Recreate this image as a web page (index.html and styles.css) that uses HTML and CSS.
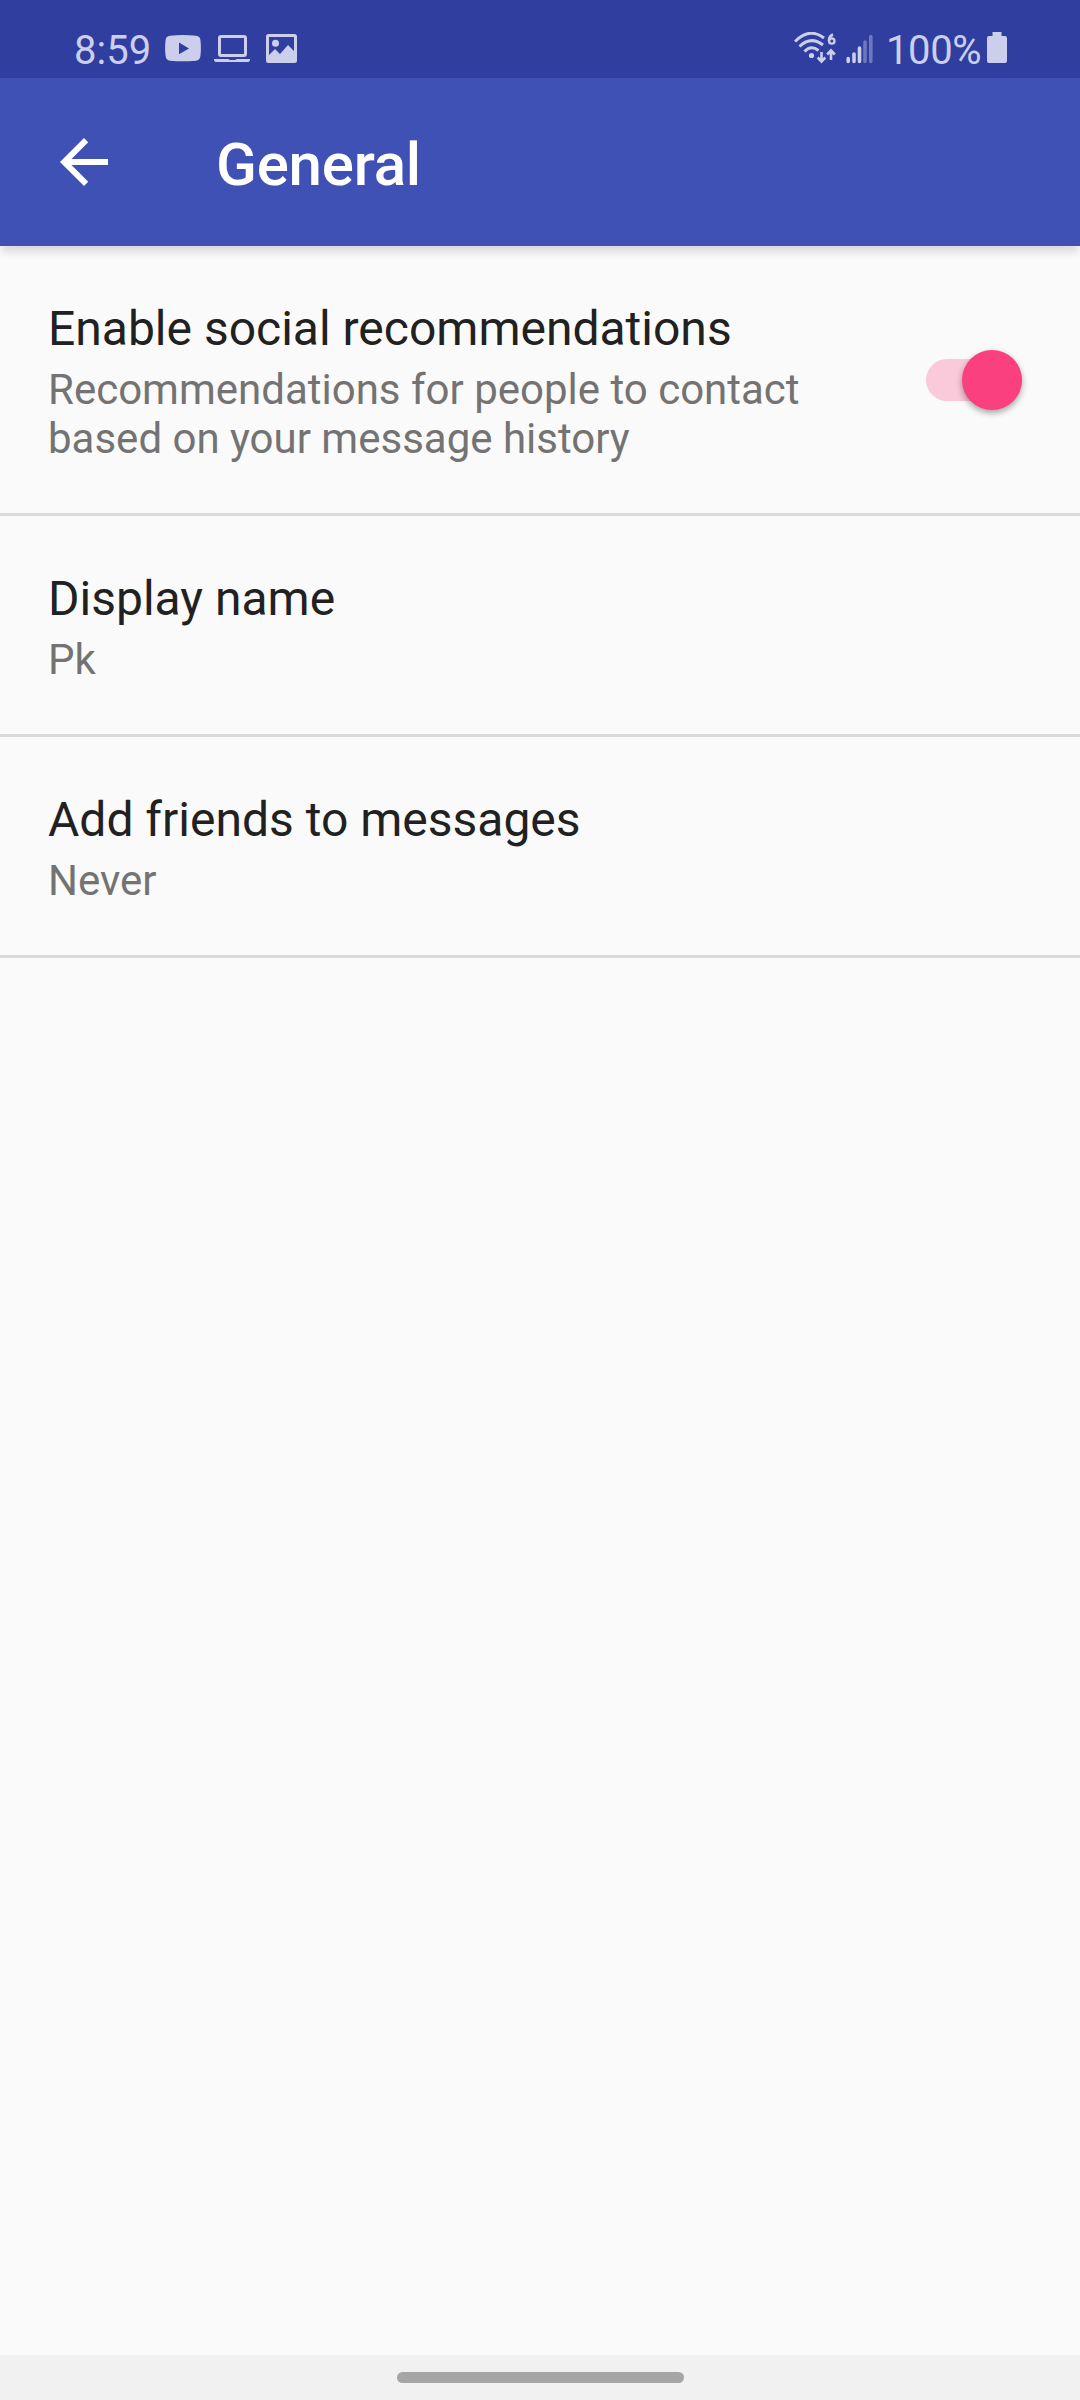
FILE: index.html
```html
<!DOCTYPE html>
<html lang="en">
<head>
<meta charset="utf-8">
<title>General</title>
<link rel="stylesheet" href="styles.css">
</head>
<body>
<div class="screen">
  <div class="status-bar">
    <div class="status-left">
      <span class="clock">8:59</span>
      <svg class="icon-video" width="36" height="27" viewBox="0 0 36 27" fill="currentColor"><path fill-rule="evenodd" d="M5 .8Q18-.6 31 .8 35 1.200 35.400 5 36.400 13.500 35.400 21 35 25.200 31 25.700 18 27 5 25.700 1 25.200.6 21-.4 13.500.6 5 1 1.200 5 .8ZM14 7.500V19.200L24 13.400Z"/></svg>
      <svg class="icon-laptop" width="36" height="28" viewBox="0 0 36 28" fill="currentColor"><path fill-rule="evenodd" d="M7 0H30Q33 0 33 3V19Q33 22 30 22H7Q4 22 4 19V3Q4 0 7 0ZM7 3V19H30V3ZM0 24H14L16 25H21L23 24H36V25.500L34.500 27H1.500L0 25.500Z"/></svg>
      <svg class="icon-image" width="31" height="29" viewBox="0 0 31 29" fill="currentColor"><path fill-rule="evenodd" d="M2.500 0H28.500Q31 0 31 2.500V26.500Q31 29 28.500 29H2.500Q0 29 0 26.500V2.500Q0 0 2.500 0ZM3 3V21L9 15 14 20 22 11 28 17V3ZM9.500 5.800A3.500 3.500 0 1 1 9.500 12.800 3.500 3.500 0 1 1 9.500 5.800Z"/></svg>
    </div>
    <div class="status-right">
      <svg class="icon-wifi" width="42" height="32" viewBox="0 0 42 32" fill="none" stroke="currentColor" stroke-width="3">
        <path d="M1 9.500Q15.500-5 30 6M5.500 14.500Q17 3.500 29 13M10.500 19.500Q17 12.500 24.500 18.500"/>
        <circle cx="17.500" cy="23.500" r="2.600" fill="currentColor" stroke="none"/>
        <path stroke-width="2.600" d="M27.500 20V29M23.700 25.500 27.500 29.500 31.300 25.500M37 28V19M33.200 22.500 37 18.500 40.800 22.500M39 2.500Q34.700 4.500 34.900 9"/>
        <circle cx="37.800" cy="9" r="2.700" stroke-width="2.300"/>
      </svg>
      <svg class="icon-signal" width="28" height="30" viewBox="0 0 28 30" stroke="currentColor" stroke-width="3.600" stroke-linecap="round"><path d="M2.200 24.500V27.500M8 20V27.500M13.500 14V27.500"/><path opacity=".4" d="M19 8V27.500M24.800 2.500V27.500"/></svg>
      <span class="battery-level">100%</span>
      <svg class="icon-battery" width="20" height="32" viewBox="0 0 20 32" fill="currentColor"><path d="M5.500 0H14.500V4H18Q20 4 20 6V29Q20 31 18 31H2Q0 31 0 29V6Q0 4 2 4H5.500Z"/></svg>
    </div>
  </div>
  <header class="toolbar">
    <svg class="icon-back" width="48" height="48" viewBox="0 0 16 16" fill="#fff"><path d="M16 7H3.830L9.420 1.410 8 0 0 8 8 16 9.410 14.590 3.830 9H16Z"/></svg>
    <h1 class="page-title">General</h1>
  </header>
  <main class="settings">
    <section class="setting">
      <div class="setting-text">
        <div class="setting-title">Enable social recommendations</div>
        <div class="setting-summary">Recommendations for people to contact<br>based on your message history</div>
      </div>
      <div class="switch"><div class="switch-thumb"></div></div>
    </section>
    <section class="setting">
      <div class="setting-text">
        <div class="setting-title">Display name</div>
        <div class="setting-summary">Pk</div>
      </div>
    </section>
    <section class="setting">
      <div class="setting-text">
        <div class="setting-title">Add friends to messages</div>
        <div class="setting-summary">Never</div>
      </div>
    </section>
  </main>
  <nav class="nav-bar"><div class="nav-handle"></div></nav>
</div>
</body>
</html>
```

FILE: styles.css
```css
* { box-sizing: border-box; }
body { margin: 0; font-family: Roboto, sans-serif; background: #fafafa; }
svg { display: block; flex: none; }
.screen { width: 1080px; height: 2400px; display: flex; flex-direction: column; }
.status-bar { height: 78px; flex: none; background: #303e9f; color: #cbcfec; display: flex; justify-content: space-between; padding: 0 73px 0 74px; }
.status-left, .status-right { display: flex; align-items: flex-start; }
.clock, .battery-level { font-size: 40px; line-height: 48px; margin-top: 27px; white-space: nowrap; }
.clock { width: 91px; }
.icon-video { margin-top: 35px; }
.icon-laptop { margin: 35px 0 0 13px; }
.icon-image { margin: 34px 0 0 16px; }
.icon-wifi { margin-top: 32px; }
.icon-signal { margin: 34px 12px 0 10px; }
.battery-level { width: 101px; letter-spacing: -0.4px; }
.icon-battery { margin-top: 32px; }
.toolbar { height: 168px; flex: none; background: #3f51b5; display: flex; align-items: center; padding: 0 60px; gap: 108px; box-shadow: 0 8px 8px -2px rgba(0, 0, 0, .13); }
.page-title { margin: 5px 0 0; font-size: 60px; line-height: 70px; font-weight: 500; letter-spacing: -0.2px; color: #fff; }
.settings { flex: 1; }
.setting { display: flex; justify-content: space-between; align-items: center; padding: 51px 58px 50px 48px; border-bottom: 3px solid #dadada; }
.setting-title { font-size: 48px; line-height: 64px; margin-bottom: 4px; color: #212121; }
.setting-summary { font-size: 42px; line-height: 49px; color: #737373; }
.switch { width: 96px; height: 42px; border-radius: 21px; background: #fac9da; display: flex; align-items: center; justify-content: flex-end; }
.switch-thumb { width: 60px; height: 60px; flex: none; border-radius: 50%; background: #fb4080; box-shadow: 0 3px 6px rgba(0, 0, 0, .35); }
.nav-bar { height: 45px; flex: none; background: #f1f1f1; display: flex; justify-content: center; padding-top: 17px; }
.nav-handle { width: 287px; height: 11px; border-radius: 6px; background: #a6a6a6; }
```
